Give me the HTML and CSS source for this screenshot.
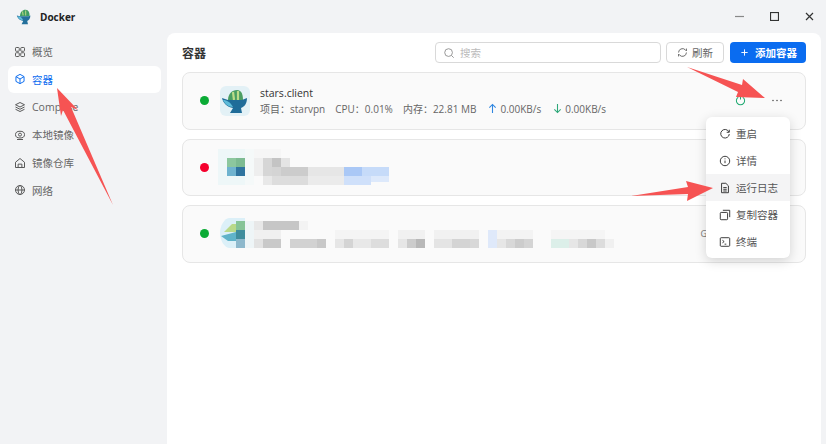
FILE: index.html
```html
<!DOCTYPE html>
<html lang="zh">
<head>
<meta charset="utf-8">
<title>Docker</title>
<link rel="stylesheet" href="styles.css">
</head>
<body>
<div class="app">
  <aside class="sidebar">
    <div class="brand">
      <svg class="brand-logo" viewBox="0 0 20 20"><path d="M5 9c0-5 3-8 7-8 4 0 5 4 5 8z" fill="#3f9d63"/><path d="M8 3l1 5M12 2l0 6" stroke="#a6cf7f" stroke-width="1.600"/><path d="M1 8l4 1h11l2-1c0 4-2 6-4 7l1 4H7l2-4C5 14 2 12 1 8z" fill="#24709c"/><path d="M2 9c3 0 5 1 7 5-3 0-6-2-7-5z" fill="#63bedb"/></svg>
      <span class="brand-name">Docker</span>
    </div>
    <nav class="nav">
      <a class="nav-item"><svg class="nav-icon" viewBox="0 0 16 16"><rect x="2" y="2" width="5" height="5" rx="1"/><rect x="9" y="2" width="5" height="5" rx="1"/><rect x="2" y="9" width="5" height="5" rx="1"/><rect x="9" y="9" width="5" height="5" rx="1"/></svg>概览</a>
      <a class="nav-item active"><svg class="nav-icon" viewBox="0 0 16 16"><path d="M8 1.800l5.400 3v6.400L8 14.200l-5.400-3V4.800z"/><path d="M2.800 5L8 8l5.200-3M8 8v6"/></svg>容器</a>
      <a class="nav-item"><svg class="nav-icon" viewBox="0 0 16 16"><path d="M8 2l6 3-6 3-6-3z"/><path d="M2 8l6 3 6-3M2 11l6 3 6-3"/></svg>Compose</a>
      <a class="nav-item"><svg class="nav-icon" viewBox="0 0 16 16"><ellipse cx="8" cy="7.500" rx="6" ry="4.500"/><circle cx="8" cy="7.500" r="2"/><path d="M4 14h8"/></svg>本地镜像</a>
      <a class="nav-item"><svg class="nav-icon" viewBox="0 0 16 16"><path d="M2 7l6-5 6 5v7H2z"/><path d="M5.500 14V9.500h5V14"/></svg>镜像仓库</a>
      <a class="nav-item"><svg class="nav-icon" viewBox="0 0 16 16"><circle cx="8" cy="8" r="6"/><ellipse cx="8" cy="8" rx="2.600" ry="6"/><path d="M2 8h12"/></svg>网络</a>
    </nav>
  </aside>
  <div class="main-col">
    <div class="titlebar">
      <svg class="win-icon" viewBox="0 0 9 9"><path d="M0 4.500h9"/></svg>
      <svg class="win-icon" viewBox="0 0 9 9"><rect x="0.500" y="0.500" width="8" height="8"/></svg>
      <svg class="win-icon" viewBox="0 0 9 9"><path d="M1 1l7 7M8 1l-7 7"/></svg>
    </div>
    <main class="panel">
      <header class="toolbar">
        <h1 class="page-title">容器</h1>
        <div class="search">
          <svg class="search-icon" viewBox="0 0 14 14"><circle cx="6.500" cy="6.500" r="4.500"/><path d="M10 10l2.500 2.500"/></svg>
          <span class="search-text">搜索</span>
        </div>
        <button class="btn btn-plain"><svg class="btn-icon" viewBox="0 0 14 14"><path d="M2 7a5 5 0 0 1 8.500-3.500L12 5V2M12 7a5 5 0 0 1-8.500 3.500L2 9v3"/></svg>刷新</button>
        <button class="btn btn-primary"><svg class="btn-icon" viewBox="0 0 14 14"><path d="M7 3v8M3 7h8"/></svg>添加容器</button>
      </header>
      <section class="list">
        <article class="card">
          <span class="dot green"></span>
          <span class="app-icon">
            <svg viewBox="0 0 30 30"><path d="M8 14c0-6 4-10 9-10 5 0 6 5 6 11H8z" fill="#4a9e63"/><path d="M13 6l1 8M18 5l0 9" stroke="#bcdc88" stroke-width="2.200"/><path d="M2 12l6 2h14l5-2c0 6-3 9-6 10l1 5H10l3-5C7 21 3 17 2 12z" fill="#1f6c99"/><path d="M3 14c4 0 7 2 10 7-5 0-8-3-10-7z" fill="#5dbbd9"/></svg>
          </span>
          <div class="info">
            <div class="name">stars.client</div>
            <div class="meta"><span>项目：starvpn</span><span>CPU：0.01%</span><span>内存：22.81 MB</span><span class="rate"><svg class="arrow-ico up" viewBox="0 0 10 12"><path d="M5 11V1.500M1.500 5L5 1.500 8.500 5"/></svg>0.00KB/s</span><span class="rate"><svg class="arrow-ico down" viewBox="0 0 10 12"><path d="M5 1v9.500M1.500 7L5 10.500 8.500 7"/></svg>0.00KB/s</span></div>
          </div>
          <div class="actions">
            <svg class="power" viewBox="0 0 12 12"><path d="M3.500 2.500a4.500 4.500 0 1 0 5 0M6 1v4"/></svg>
            <svg class="more" viewBox="0 0 10 3"><circle cx="1" cy="1.500" r="0.800"/><circle cx="5" cy="1.500" r="0.800"/><circle cx="9" cy="1.500" r="0.800"/></svg>
          </div>
        </article>
        <article class="card">
          <span class="dot red"></span>
          <svg class="mosaic" viewBox="0 0 180 40" width="180" height="40">
            <rect x="0" y="0" width="27" height="36" fill="#eef7f8"/>
            <rect x="27" y="0" width="9" height="36" fill="#f5f9f9"/>
            <rect x="9" y="9" width="9" height="9" fill="#8cc79e"/><rect x="18" y="9" width="9" height="9" fill="#7dbb92"/>
            <rect x="9" y="18" width="9" height="9" fill="#6fb3cf"/><rect x="18" y="18" width="9" height="9" fill="#2f749f"/>
            <rect x="36" y="0" width="27" height="9" fill="#f6f6f6"/>
            <rect x="36" y="9" width="9" height="18" fill="#eeeeee"/>
            <rect x="45" y="9" width="9" height="18" fill="#d6d6d6"/><rect x="45" y="27" width="9" height="9" fill="#e8e8e8"/>
            <rect x="54" y="9" width="9" height="9" fill="#c4c4c4"/><rect x="54" y="18" width="9" height="9" fill="#d4d4d4"/><rect x="54" y="27" width="9" height="9" fill="#dddddd"/>
            <rect x="63" y="9" width="9" height="9" fill="#e4e4e4"/><rect x="63" y="18" width="9" height="9" fill="#cccccc"/><rect x="63" y="27" width="9" height="9" fill="#dddddd"/>
            <rect x="72" y="18" width="18" height="9" fill="#cccccc"/><rect x="72" y="27" width="18" height="9" fill="#dcdcdc"/>
            <rect x="90" y="18" width="36" height="9" fill="#e6e6e6"/><rect x="90" y="27" width="36" height="9" fill="#ebebeb"/>
            <rect x="126" y="18" width="18" height="9" fill="#aac8f6"/><rect x="144" y="18" width="27" height="9" fill="#c6dbf9"/>
            <rect x="126" y="27" width="27" height="9" fill="#cfe0fa"/><rect x="153" y="27" width="18" height="6" fill="#dde9fb"/>
          </svg>
        </article>
        <article class="card">
          <span class="dot green"></span>
          <svg class="mosaic" viewBox="0 0 400 40" width="400" height="40">
            <path d="M12 0h15v30H12C6 30 2 22 2 15S6 0 12 0z" fill="#dcf0f8"/>
            <path d="M6 14l8-8 4 0v8z" fill="#b9d98a"/><path d="M3 18l15-4v9H10z" fill="#5fb3c9"/>
            <rect x="18" y="3" width="9" height="9" fill="#86c498"/>
            <rect x="18" y="12" width="9" height="9" fill="#3f8d9d"/>
            <rect x="18" y="21" width="9" height="9" fill="#8db8cc"/><rect x="27" y="3" width="9" height="27" fill="#eef5f7"/>
            <rect x="36" y="3" width="9" height="9" fill="#e8e8e8"/><rect x="45" y="3" width="36" height="9" fill="#c6c6c6"/><rect x="81" y="3" width="9" height="9" fill="#f3f3f3"/>
            <rect x="36" y="12" width="27" height="9" fill="#f0f0f0"/>
            <rect x="36" y="21" width="9" height="9" fill="#e3e3e3"/><rect x="45" y="21" width="18" height="9" fill="#c9c9c9"/>
            <rect x="72" y="21" width="27" height="9" fill="#d2d2d2"/><rect x="99" y="21" width="9" height="9" fill="#c8c8c8"/>
            <rect x="117" y="21" width="9" height="9" fill="#e6e6e6"/><rect x="126" y="21" width="9" height="9" fill="#d4d4d4"/><rect x="135" y="21" width="18" height="9" fill="#e8e8e8"/><rect x="153" y="21" width="18" height="9" fill="#dddddd"/>
            <rect x="117" y="12" width="54" height="9" fill="#f4f4f4"/>
            <rect x="180" y="12" width="27" height="9" fill="#f1f1f1"/><rect x="180" y="21" width="9" height="9" fill="#e6e6e6"/><rect x="189" y="21" width="9" height="9" fill="#cccccc"/><rect x="198" y="21" width="9" height="9" fill="#b8b8b8"/>
            <rect x="216" y="12" width="45" height="9" fill="#f1f1f1"/><rect x="216" y="21" width="18" height="9" fill="#e4e4e4"/><rect x="234" y="21" width="18" height="9" fill="#d4d4d4"/><rect x="252" y="21" width="9" height="9" fill="#d8d8d8"/>
            <rect x="270" y="12" width="9" height="18" fill="#dfe9fa"/><rect x="279" y="12" width="36" height="9" fill="#f3f3f3"/><rect x="279" y="21" width="9" height="9" fill="#e6e6e6"/><rect x="288" y="21" width="9" height="9" fill="#d8d8d8"/><rect x="297" y="21" width="9" height="9" fill="#cccccc"/><rect x="306" y="21" width="9" height="9" fill="#d4d4d4"/>
            <rect x="333" y="21" width="18" height="9" fill="#dcefe9"/><rect x="333" y="12" width="54" height="9" fill="#f5f5f5"/><rect x="351" y="21" width="9" height="9" fill="#e6e6e6"/><rect x="360" y="21" width="9" height="9" fill="#d8d8d8"/><rect x="369" y="21" width="9" height="9" fill="#c8c8c8"/><rect x="378" y="21" width="9" height="9" fill="#dcdcdc"/><rect x="387" y="21" width="9" height="9" fill="#f0f0f0"/>
          </svg>
          <div class="actions"><span class="link-glyph">G</span></div>
        </article>
      </section>
      <div class="menu">
        <div class="menu-item"><svg class="menu-icon" viewBox="0 0 14 14"><path d="M11.500 4.500A5 5 0 1 0 12 7M12 2v3H9"/></svg>重启</div>
        <div class="menu-item"><svg class="menu-icon" viewBox="0 0 14 14"><circle cx="7" cy="7" r="5.500"/><path d="M7 6.500v3M7 4v1"/></svg>详情</div>
        <div class="menu-item hover"><svg class="menu-icon" viewBox="0 0 14 14"><path d="M3 1.500h5l3 3v8H3z"/><path d="M5 6.500h4M5 8.500h4M5 10.500h4"/></svg>运行日志</div>
        <div class="menu-item"><svg class="menu-icon" viewBox="0 0 14 14"><rect x="1.500" y="4" width="8.500" height="8.500" rx="1"/><path d="M4.500 1.500h8v8"/></svg>复制容器</div>
        <div class="menu-item"><svg class="menu-icon" viewBox="0 0 14 14"><rect x="1.500" y="2" width="11" height="10" rx="1"/><path d="M4 5l2 1.500L4 8M6.500 9.500h2"/></svg>终端</div>
      </div>
    </main>
  </div>
</div>
<svg class="annotations" viewBox="0 0 826 444" width="826" height="444">
  <path class="mark" d="M113 205L63 110 61 116 57 88 78 110 71 107z"/>
  <path class="mark" d="M687 67L742 85 743 79 765 98 736 97 738 92z"/>
  <path class="mark" d="M631 196L688 187 686 181 713 188 687 201 688 194z"/>
</svg>
</body>
</html>
```
FILE: styles.css
```css
* { box-sizing: border-box; }
html, body { margin: 0; height: 100%; overflow: hidden; }
body { font-family: "Open Sans", "Noto Sans CJK SC", sans-serif; font-size: 10.500px; color: #555; background: #f2f3f5; position: relative; }
svg { display: block; flex: none; }
.app { display: flex; height: 444px; }
.sidebar { width: 167px; flex: none; padding: 0 6px 0 8px; }
.brand { display: flex; align-items: center; gap: 8px; height: 33px; padding-left: 8px; }
.brand-logo { width: 16px; height: 16px; }
.brand-name { font-size: 10px; font-weight: 700; color: #222; }
.nav { display: flex; flex-direction: column; gap: 0.800px; padding-top: 5px; }
.nav-item { display: flex; align-items: center; gap: 6px; height: 27px; padding-left: 6px; border-radius: 6px; color: #666; font-size: 10.500px; }
.nav-item.active { background: #fff; color: #0a6cf0; }
.nav-icon { width: 12px; height: 12px; fill: none; stroke: #555; stroke-width: 1.300; }
.active .nav-icon { stroke: #0a6cf0; }
.main-col { flex: none; width: 654px; display: flex; flex-direction: column; }
.titlebar { height: 33px; display: flex; align-items: center; justify-content: flex-end; gap: 26px; padding-right: 7px; flex: none; }
.win-icon { width: 9px; height: 9px; fill: none; stroke: #333; stroke-width: 1.200; }
.win-icon:first-child { stroke: #888; }
.panel { flex: 1; background: #fff; border-radius: 8px 8px 0 0; padding: 9px 15px 0; position: relative; }
.toolbar { display: flex; align-items: center; height: 21px; }
.page-title { margin: 0; font-size: 12px; font-weight: 700; color: #333; margin-right: auto; }
.search { width: 226px; height: 21px; border: 1px solid #d9d9d9; border-radius: 4px; display: flex; align-items: center; gap: 5px; padding-left: 7px; margin-right: 5px; }
.search-icon { width: 12px; height: 12px; fill: none; stroke: #888; stroke-width: 1; }
.search-text { color: #bbb; font-size: 10.500px; }
.btn { height: 21px; border-radius: 4px; display: flex; align-items: center; font: inherit; font-size: 10.500px; padding: 0; }
.btn-plain { width: 58px; margin-right: 6px; border: 1px solid #d9d9d9; background: #fff; color: #666; gap: 4px; padding-left: 10px; }
.btn-primary { width: 76px; border: 0; background: #0a6cf0; color: #fff; gap: 5px; padding-left: 9px; font-weight: 700; }
.btn-icon { width: 11px; height: 11px; fill: none; stroke: currentColor; stroke-width: 1.200; }
.list { display: flex; flex-direction: column; gap: 9px; margin-top: 9px; }
.card { height: 57.500px; background: #fafafa; border: 1px solid #e6e6e6; border-radius: 8px; display: flex; align-items: center; padding-left: 17px; }
.dot { width: 9px; height: 9px; border-radius: 50%; flex: none; margin-right: 12px; }
.dot.green { background: #0bab35; }
.dot.red { background: #f5002d; }
.app-icon { width: 30px; height: 30px; border-radius: 6px; background: #e3f1f6; margin-left: -1px; margin-right: 10px; flex: none; }
.info { flex: 1; min-width: 0; }
.name { font-size: 10.500px; color: #333; line-height: 16px; }
.meta { display: flex; gap: 10px; font-size: 10px; line-height: 16px; color: #666; }
.rate { display: flex; align-items: center; gap: 3px; margin-left: 2px; }
.arrow-ico { width: 9px; height: 11px; fill: none; stroke-width: 1.200; }
.arrow-ico.up { stroke: #2f86e0; }
.arrow-ico.down { stroke: #2ea87a; }
.actions { display: flex; align-items: center; gap: 26px; margin-left: auto; padding-right: 23px; }
.power { width: 11px; height: 11px; fill: none; stroke: #1fa971; stroke-width: 1.100; }
.more { width: 10px; height: 3px; fill: #555; }
.link-glyph { color: #777; font-size: 9px; margin-right: 75px; }
.mosaic { margin-left: -3px; margin-top: 3px; }
.card:nth-child(3) .mosaic { margin-top: 8px; }
.menu { position: absolute; left: 539px; top: 84px; width: 84px; height: 141px; padding: 0; background: #fff; border-radius: 6px; box-shadow: 0 3px 12px rgba(0,0,0,.16); display: flex; flex-direction: column; justify-content: center; }
.menu-item { height: 27px; display: flex; align-items: center; gap: 5px; padding-left: 13px; color: #555; font-size: 10.500px; }
.menu-item.hover { background: #f4f4f5; }
.menu-icon { width: 12px; height: 12px; fill: none; stroke: #333; stroke-width: 1.100; }
.annotations { position: absolute; left: 0; top: 0; pointer-events: none; }
.mark { fill: #f65353; }
```
